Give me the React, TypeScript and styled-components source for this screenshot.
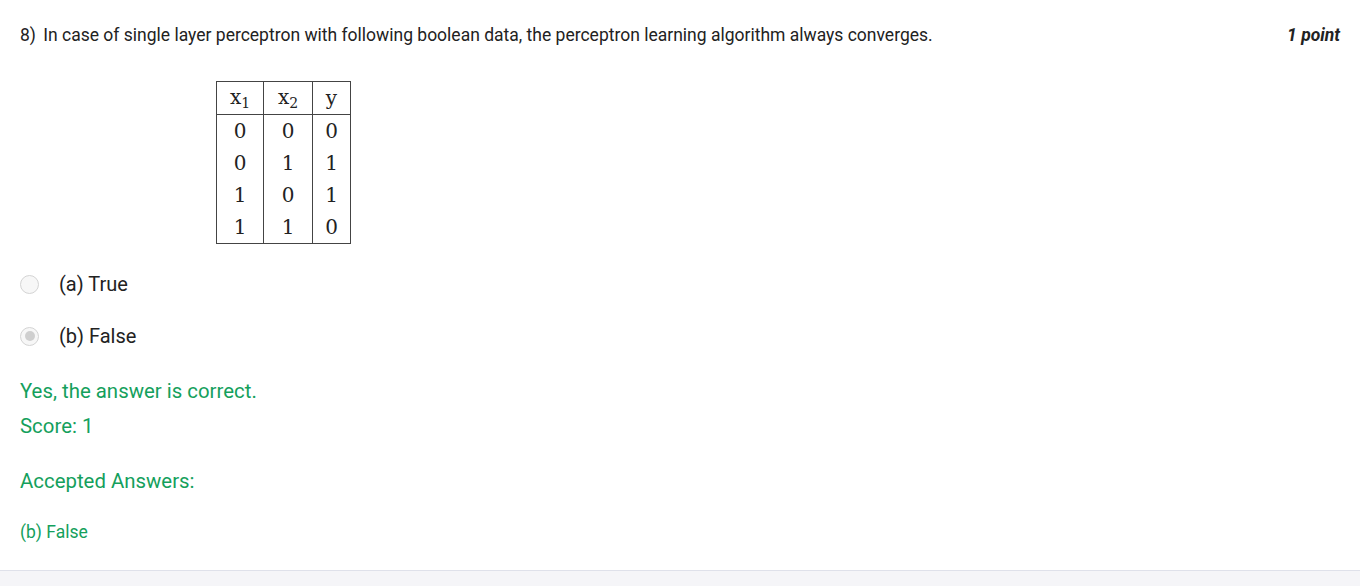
import React from "react";
import styled, { createGlobalStyle } from "styled-components";

const Global = createGlobalStyle`
  html, body { margin: 0; padding: 0; background: #f5f5f8; }
  body { font-family: Roboto, "Noto Sans", Arial, sans-serif; color: #222; }
`;

const Card = styled.div`
  background: #fff;
  height: 571px;
  border-bottom: 1px solid #dfe1ea;
  padding: 0 20px;
  box-sizing: border-box;
  display: flex;
  flex-direction: column;
`;

const Header = styled.div`
  display: flex;
  justify-content: space-between;
  align-items: baseline;
  padding-top: 24px;
  font-size: 17.5px;
  line-height: 22px;
`;

const Question = styled.div`
  color: #222;
`;

const Num = styled.span`
  margin-right: 3px;
`;

const Points = styled.div`
  font-weight: 700;
  font-style: italic;
  color: #222;
  font-size: 17.5px;
`;

const TableWrap = styled.div`
  padding-left: 196px;
  margin-top: 35px;
`;

const Truth = styled.table`
  border-collapse: collapse;
  border: 1.5px solid #444;
  font-family: "DejaVu Serif", "Liberation Serif", serif;
  font-size: 20px;
  color: #222;
  td, th {
    border-left: 1.5px solid #444;
    text-align: center;
    height: 32px;
    padding: 0;
    font-weight: 400;
  }
  th { border-bottom: 1.5px solid #444; height: 32px; }
`;

const ColA = styled.col`width: 47px;`;
const ColB = styled.col`width: 49px;`;
const ColC = styled.col`width: 38px;`;

const Options = styled.div`
  margin-top: 27px;
  display: flex;
  flex-direction: column;
  gap: 26px;
`;

const Option = styled.label`
  display: flex;
  align-items: center;
  gap: 20px;
  font-size: 20px;
  line-height: 26px;
  color: #222;
`;

const Radio = styled.span<{ $checked?: boolean }>`
  width: 17px;
  height: 17px;
  border-radius: 50%;
  border: 1px solid #d4d4d4;
  background: #f7f7f7;
  display: inline-flex;
  align-items: center;
  justify-content: center;
  &::after {
    content: "";
    width: 10px;
    height: 10px;
    border-radius: 50%;
    background: ${(p) => (p.$checked ? "#cfcfcf" : "transparent")};
  }
`;

const Feedback = styled.div<{ $top: number; $size: number }>`
  color: #14a05c;
  font-size: ${(p) => p.$size}px;
  line-height: 24px;
  margin-top: ${(p) => p.$top}px;
`;

const SubIdx = styled.sub`
  font-size: 14px;
  vertical-align: -4px;
`;

function Sub({ n }: { n: number }) {
  return (
    <>
      x<SubIdx>{n}</SubIdx>
    </>
  );
}

export default function App() {
  const rows = [
    [0, 0, 0],
    [0, 1, 1],
    [1, 0, 1],
    [1, 1, 0],
  ];
  return (
    <>
      <Global />
      <Card>
        <Header>
          <Question>
            <Num>8)</Num> In case of single layer perceptron with following boolean data, the perceptron learning algorithm always converges.
          </Question>
          <Points>1 point</Points>
        </Header>
        <TableWrap>
          <Truth>
            <colgroup>
              <ColA />
              <ColB />
              <ColC />
            </colgroup>
            <thead>
              <tr>
                <th style={{ borderLeft: "none" }}>
                  <Sub n={1} />
                </th>
                <th>
                  <Sub n={2} />
                </th>
                <th>y</th>
              </tr>
            </thead>
            <tbody>
              {rows.map((r, i) => (
                <tr key={i}>
                  {r.map((v, j) => (
                    <td key={j} style={j === 0 ? { borderLeft: "none" } : undefined}>
                      {v}
                    </td>
                  ))}
                </tr>
              ))}
            </tbody>
          </Truth>
        </TableWrap>
        <Options>
          <Option>
            <Radio />
            (a) True
          </Option>
          <Option>
            <Radio $checked />
            (b) False
          </Option>
        </Options>
        <Feedback $top={30} $size={20.4}>Yes, the answer is correct.</Feedback>
        <Feedback $top={11} $size={20.4}>Score: 1</Feedback>
        <Feedback $top={31} $size={20.4}>Accepted Answers:</Feedback>
        <Feedback $top={27} $size={17.5}>(b) False</Feedback>
      </Card>
    </>
  );
}
